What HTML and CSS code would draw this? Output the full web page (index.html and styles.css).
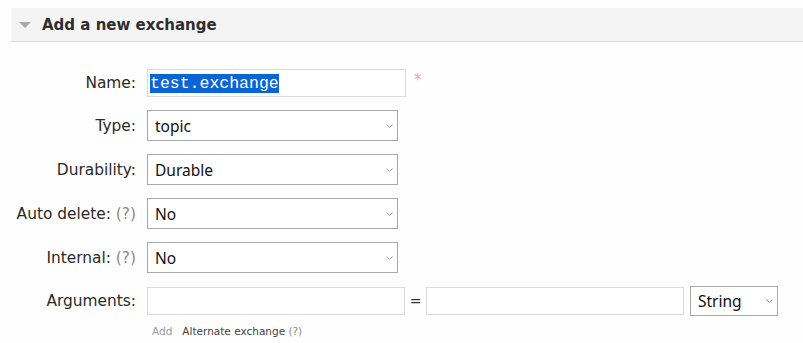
FILE: index.html
```html
<!DOCTYPE html>
<html lang="en">
<head>
    <meta charset="UTF-8">
    <title>Add a new exchange</title>
    <link rel="stylesheet" href="styles.css">
</head>
<body>
    <div class="section-head">
        <span class="arrow"></span>
        <h2>Add a new exchange</h2>
    </div>

    <form class="form">
        <div class="row">
            <label class="label">Name:</label>
            <div class="text-input name-input"><span class="selected">test.exchange</span></div>
            <span class="mand">*</span>
        </div>
        <div class="row">
            <label class="label">Type:</label>
            <select class="select"><option>topic</option></select>
        </div>
        <div class="row">
            <label class="label">Durability:</label>
            <select class="select"><option>Durable</option></select>
        </div>
        <div class="row">
            <label class="label">Auto delete: <span class="help">(?)</span></label>
            <select class="select"><option>No</option></select>
        </div>
        <div class="row">
            <label class="label">Internal: <span class="help">(?)</span></label>
            <select class="select"><option>No</option></select>
        </div>
        <div class="row">
            <label class="label">Arguments:</label>
            <input class="text-input arg-input" type="text">
            <span class="equals">=</span>
            <input class="text-input arg-input" type="text">
            <select class="select type-select"><option>String</option></select>
        </div>
        <div class="row links">
            <span class="add">Add</span>
            <span class="alt">Alternate exchange <span class="help">(?)</span></span>
        </div>
    </form>
</body>
</html>
```

FILE: styles.css
```css
body {
    margin: 8px 0 0 11px;
    background-color: #fefefe;
    font-family: "DejaVu Sans", Verdana, sans-serif;
    color: #333;
    overflow: hidden;
}
.section-head {
    display: flex;
    align-items: center;
    height: 33px;
    background-color: #f4f4f4;
    border-bottom: 1px solid #dcdcdc;
}
.arrow {
    width: 0;
    height: 0;
    margin: 1px 11px 0 8px;
    border-left: 6.5px solid transparent;
    border-right: 6.5px solid transparent;
    border-top: 6px solid #a8a8a8;
}
h2 {
    margin: 0;
    font-size: 15px;
    font-weight: bold;
    color: #2e2e2e;
}
.form {
    display: flex;
    flex-direction: column;
    gap: 13px;
    margin-top: 27px;
}
.row {
    display: flex;
    align-items: center;
}
.label {
    width: 125px;
    margin-right: 11px;
    text-align: right;
    white-space: nowrap;
    font-size: 15.4px;
    color: #2a2a2a;
}
.help {
    color: #8a8a8a;
}
.text-input {
    box-sizing: border-box;
    width: 259px;
    height: 28px;
    padding: 0 2px;
    border: 1px solid #dadada;
    background-color: #fff;
    font-family: "Noto Sans", sans-serif;
}
.name-input {
    display: flex;
    align-items: center;
}
.selected {
    font-family: "Liberation Mono", monospace;
    font-size: 16.5px;
    line-height: 19px;
    color: #fff;
    background-color: #0a64d6;
}
.mand {
    margin: -7px 0 0 8px;
    font-size: 15px;
    color: #f2a4a4;
}
.select {
    box-sizing: border-box;
    width: 251px;
    height: 31px;
    padding: 0 20px 0 7px;
    border: 1px solid #a9a9a9;
    border-radius: 0;
    background: #fff url("data:image/svg+xml;utf8,<svg xmlns='http://www.w3.org/2000/svg' width='7' height='4'><path d='M0.5 0.5 L3.5 3.5 L6.5 0.5' fill='none' stroke='%23999' stroke-width='1'/></svg>") no-repeat right 4px center;
    appearance: none;
    -webkit-appearance: none;
    font-family: "Noto Sans", sans-serif;
    font-size: 15.5px;
    color: #111;
}
.arg-input {
    width: 258px;
    height: 28px;
}
.equals {
    width: 21px;
    text-align: center;
    font-size: 14px;
    color: #333;
}
.type-select {
    width: 88px;
    height: 30px;
    margin-left: 6px;
}
.links {
    margin-top: -4px;
    padding-left: 141px;
    font-size: 10.5px;
}
.add {
    color: #9a9a9a;
    margin-right: 10px;
}
.alt {
    color: #444;
}
```
